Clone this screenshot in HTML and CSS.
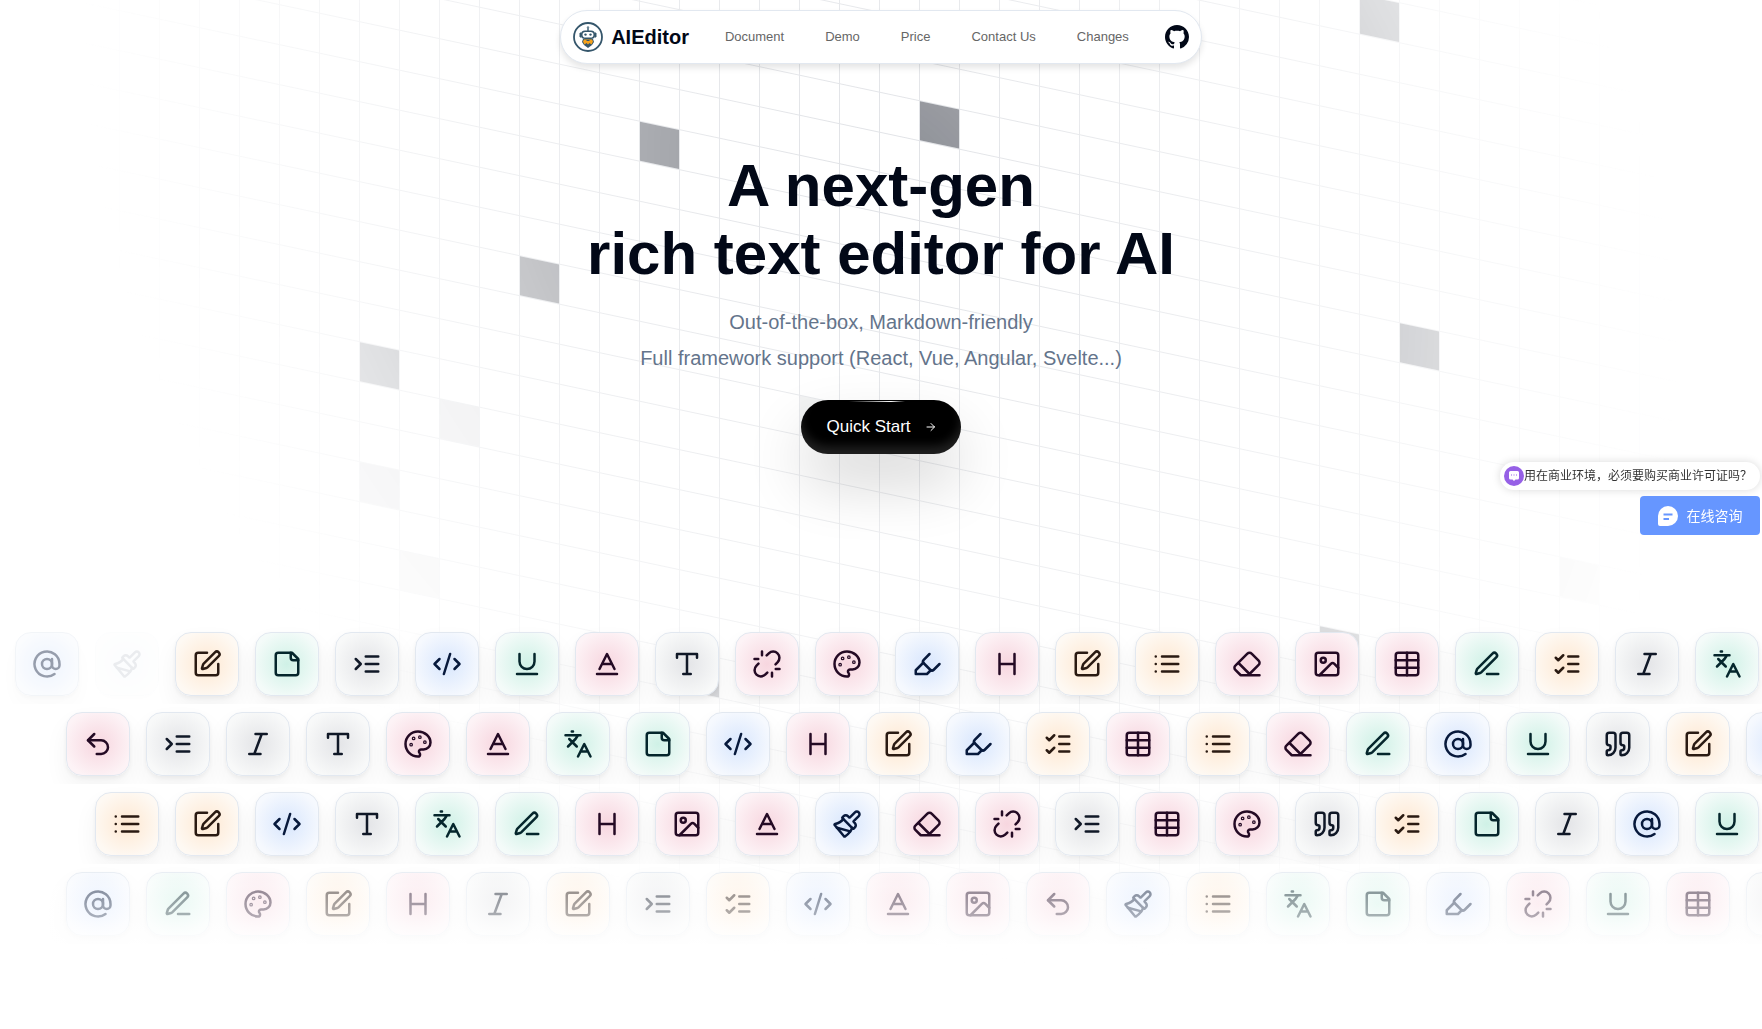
FILE: index.html
```html
<!DOCTYPE html>
<html lang="en">
<head>
<meta charset="utf-8">
<meta name="viewport" content="width=device-width, initial-scale=1">
<title>AIEditor</title>
<link rel="stylesheet" href="styles.css">
</head>
<body>
<svg class="sprite" aria-hidden="true">
  <symbol id="i-at" viewBox="0 0 24 24"><circle cx="12" cy="12" r="4"/><path d="M16 8v5a3 3 0 0 0 6 0v-1a10 10 0 1 0-4 8"/></symbol>
  <symbol id="i-brush" viewBox="0 0 24 24"><path d="m14.622 17.897-10.68-2.913"/><path d="M18.376 2.622a1 1 0 1 1 3.002 3.002L17.36 9.643a.5.5 0 0 0 0 .707l.944.944a2.41 2.41 0 0 1 0 3.408l-.944.944a.5.5 0 0 1-.707 0L8.354 7.348a.5.5 0 0 1 0-.707l.944-.944a2.41 2.41 0 0 1 3.408 0l.944.944a.5.5 0 0 0 .707 0z"/><path d="M9 8c-1.804 2.71-3.97 3.46-6.583 3.948a.507.507 0 0 0-.302.819l7.32 8.883a1 1 0 0 0 1.185.204C12.735 20.405 16 16.792 16 15"/></symbol>
  <symbol id="i-edit" viewBox="0 0 24 24"><path d="M12 3H5a2 2 0 0 0-2 2v14a2 2 0 0 0 2 2h14a2 2 0 0 0 2-2v-7"/><path d="M18.375 2.625a1 1 0 0 1 3 3l-9.013 9.014a2 2 0 0 1-.853.505l-2.873.84a.5.5 0 0 1-.62-.62l.84-2.873a2 2 0 0 1 .506-.852z"/></symbol>
  <symbol id="i-note" viewBox="0 0 24 24"><path d="M16 3H5a2 2 0 0 0-2 2v14a2 2 0 0 0 2 2h14a2 2 0 0 0 2-2V8Z"/><path d="M15 3v4a2 2 0 0 0 2 2h4"/></symbol>
  <symbol id="i-indent" viewBox="0 0 24 24"><path d="m3 8 4 4-4 4M21 12H11M21 6H11M21 18H11"/></symbol>
  <symbol id="i-code" viewBox="0 0 24 24"><path d="m18 16 4-4-4-4M6 8l-4 4 4 4M14.500 4l-5 16"/></symbol>
  <symbol id="i-underline" viewBox="0 0 24 24"><path d="M6 4v6a6 6 0 0 0 12 0V4M4 20h16"/></symbol>
  <symbol id="i-baseline" viewBox="0 0 24 24"><path d="M4 20h16M6 16l6-12 6 12M8 12h8"/></symbol>
  <symbol id="i-type" viewBox="0 0 24 24"><path d="M4 7V4h16v3M9 20h6M12 4v16"/></symbol>
  <symbol id="i-unlink" viewBox="0 0 24 24"><path d="m18.84 12.250 1.720-1.710h-.020a5.004 5.004 0 0 0-.120-7.070 5.006 5.006 0 0 0-6.950 0l-1.720 1.710M5.170 11.750l-1.710 1.710a5.004 5.004 0 0 0 .120 7.070 5.006 5.006 0 0 0 6.950 0l1.710-1.710M8 2v3M2 8h3M16 19v3M19 16h3"/></symbol>
  <symbol id="i-palette" viewBox="0 0 24 24"><circle cx="13.500" cy="6.500" r=".500"/><circle cx="17.500" cy="10.500" r=".500"/><circle cx="8.500" cy="7.500" r=".500"/><circle cx="6.500" cy="12.500" r=".500"/><path d="M12 2C6.500 2 2 6.500 2 12s4.500 10 10 10c.926 0 1.648-.746 1.648-1.688 0-.437-.180-.835-.437-1.125-.290-.289-.438-.652-.438-1.125a1.640 1.640 0 0 1 1.668-1.668h1.996c3.051 0 5.555-2.503 5.555-5.554C21.965 6.012 17.461 2 12 2z"/></symbol>
  <symbol id="i-highlight" viewBox="0 0 24 24"><path d="m9 11-6 6v3h9l3-3"/><path d="m22 12-4.600 4.600a2 2 0 0 1-2.800 0l-5.200-5.200a2 2 0 0 1 0-2.800L14 4"/></symbol>
  <symbol id="i-heading" viewBox="0 0 24 24"><path d="M6 12h12M6 20V4M18 20V4"/></symbol>
  <symbol id="i-list" viewBox="0 0 24 24"><path d="M8 6h13M8 12h13M8 18h13M3 6h.010M3 12h.010M3 18h.010"/></symbol>
  <symbol id="i-eraser" viewBox="0 0 24 24"><path d="m7 21-4.300-4.300c-1-1-1-2.500 0-3.400l9.600-9.600c1-1 2.500-1 3.400 0l5.600 5.600c1 1 1 2.500 0 3.400L13 21M22 21H7M5 11l9 9"/></symbol>
  <symbol id="i-image" viewBox="0 0 24 24"><rect x="3" y="3" width="18" height="18" rx="2"/><circle cx="9" cy="9" r="2"/><path d="m21 15-3.086-3.086a2 2 0 0 0-2.828 0L6 21"/></symbol>
  <symbol id="i-table" viewBox="0 0 24 24"><rect x="3" y="3" width="18" height="18" rx="2"/><path d="M12 3v18M3 9h18M3 15h18"/></symbol>
  <symbol id="i-pen" viewBox="0 0 24 24"><path d="M12 20h9"/><path d="M16.376 3.622a1 1 0 0 1 3.002 3.002L7.368 18.635a2 2 0 0 1-.855.506l-2.872.838a.5.5 0 0 1-.62-.62l.838-2.872a2 2 0 0 1 .506-.854z"/></symbol>
  <symbol id="i-checks" viewBox="0 0 24 24"><path d="m3 17 2 2 4-4M3 7l2 2 4-4M13 6h8M13 12h8M13 18h8"/></symbol>
  <symbol id="i-italic" viewBox="0 0 24 24"><path d="M19 4h-9M14 20H5M15 4 9 20"/></symbol>
  <symbol id="i-translate" viewBox="0 0 24 24"><path d="m5 8 6 6M4 14l6-6 2-3M2 5h12M7 2h1M22 22l-5-10-5 10M14 18h6"/></symbol>
  <symbol id="i-undo" viewBox="0 0 24 24"><path d="M9 14 4 9l5-5"/><path d="M4 9h10.500a5.500 5.500 0 0 1 0 11H11"/></symbol>
  <symbol id="i-quote" viewBox="0 0 24 24"><path d="M16 3a2 2 0 0 0-2 2v6a2 2 0 0 0 2 2 1 1 0 0 1 1 1v1a2 2 0 0 1-2 2 1 1 0 0 0-1 1v2a1 1 0 0 0 1 1 6 6 0 0 0 6-6V5a2 2 0 0 0-2-2z"/><path d="M5 3a2 2 0 0 0-2 2v6a2 2 0 0 0 2 2 1 1 0 0 1 1 1v1a2 2 0 0 1-2 2 1 1 0 0 0-1 1v2a1 1 0 0 0 1 1 6 6 0 0 0 6-6V5a2 2 0 0 0-2-2z"/></symbol>
</svg>

<div class="page">
  <svg class="grid-bg" aria-hidden="true">
    <defs>
      <pattern id="cells" width="40" height="40" patternUnits="userSpaceOnUse" x="-1" y="-1"><path d="M.5 40V.5H40" fill="none"/></pattern>
    </defs>
    <rect width="100%" height="100%" fill="url(#cells)"/>
    <g class="squares">
      <rect x="640" y="520" width="39" height="39" opacity=".48"/>
      <rect x="920" y="440" width="39" height="39" opacity=".48"/>
      <rect x="520" y="680" width="39" height="39" opacity=".44"/>
      <rect x="360" y="800" width="39" height="39" opacity=".42"/>
      <rect x="440" y="840" width="39" height="39" opacity=".12"/>
      <rect x="360" y="920" width="39" height="39" opacity=".15"/>
      <rect x="400" y="1000" width="39" height="39" opacity=".1"/>
      <rect x="1360" y="240" width="39" height="39" opacity=".48"/>
      <rect x="1400" y="560" width="39" height="39" opacity=".49"/>
      <rect x="1560" y="760" width="39" height="39" opacity=".15"/>
      <rect x="1320" y="880" width="39" height="39" opacity=".45"/>
      <rect x="680" y="1040" width="39" height="39" opacity=".5"/>
      <rect x="800" y="760" width="39" height="39" opacity=".07"/>
    </g>
  </svg>

  <header class="navbar">
    <a class="brand" href="#">
      <svg class="brand-logo" viewBox="0 0 30 30" aria-hidden="true">
        <circle cx="15" cy="15" r="14" fill="#fff" stroke="#35566b" stroke-width="1.800"/>
        <path d="M15 5v4" stroke="#6d8797" stroke-width="2"/>
        <circle cx="15" cy="5.500" r="1.200" fill="#6d8797"/>
        <rect x="8" y="8.500" width="14" height="8.500" rx="4" fill="#35566b"/>
        <path d="M8.500 11H7v4h1.500M21.500 11H23v4h-1.500" fill="#35566b" stroke="#35566b"/>
        <rect x="9.500" y="10" width="11" height="5.600" rx="2.800" fill="#fff"/>
        <circle cx="12.500" cy="12.600" r="1.200" fill="#35566b"/><circle cx="17.500" cy="12.600" r="1.200" fill="#35566b"/>
        <path d="M10 17h10l1 3-2 3-4 3-4-3-2-3z" fill="#35566b"/>
        <path d="M11 17.500h8l1 2-1.500 3-2-1.500-1.500 1.500-1.500-1.500-2 1.500L10 19.500z" fill="#f5a11c"/>
        <path d="M13.500 18.500h3" stroke="#35566b"/>
      </svg>
      <span class="brand-name">AIEditor</span>
    </a>
    <nav class="nav-links" aria-label="Main">
      <a href="#">Document</a>
      <a href="#">Demo</a>
      <a href="#">Price</a>
      <a href="#">Contact Us</a>
      <a href="#">Changes</a>
    </nav>
    <a class="github" href="#" aria-label="GitHub">
      <svg viewBox="0 0 16 16" aria-hidden="true"><path d="M8 0C3.580 0 0 3.580 0 8c0 3.540 2.290 6.530 5.470 7.590.4.070.550-.170.550-.380 0-.190-.010-.820-.010-1.490-2.010.370-2.530-.490-2.690-.940-.090-.230-.480-.940-.820-1.130-.280-.150-.680-.520-.010-.530.630-.010 1.080.580 1.230.820.720 1.210 1.870.870 2.330.660.070-.520.280-.870.510-1.070-1.780-.2-3.640-.890-3.640-3.950 0-.870.310-1.590.820-2.150-.080-.2-.360-1.020.080-2.120 0 0 .670-.210 2.200.820.640-.180 1.320-.270 2-.270s1.360.090 2 .270c1.530-1.040 2.200-.820 2.200-.820.440 1.100.160 1.920.080 2.120.510.560.820 1.270.820 2.150 0 3.070-1.870 3.750-3.650 3.950.290.250.540.730.540 1.480 0 1.070-.010 1.930-.010 2.200 0 .210.150.460.550.380A8.012 8.012 0 0 0 16 8c0-4.420-3.580-8-8-8z"/></svg>
    </a>
  </header>

  <main>
    <section class="hero">
      <h1>A next-gen<br>rich text editor for AI</h1>
      <p>Out-of-the-box, Markdown-friendly<br>Full framework support (React, Vue, Angular, Svelte...)</p>
      <button class="cta" type="button">
        Quick Start
        <svg viewBox="0 0 10 10" aria-hidden="true"><path d="M1 5h7.500M5 1.500 8.500 5 5 8.500"/></svg>
      </button>
    </section>
    <section class="marquee" aria-label="Editor features" id="marquee"></section>
  </main>

  <aside class="chat" aria-label="在线咨询">
    <a class="chat-tip" href="#">
      <svg viewBox="0 0 20 20" aria-hidden="true"><circle cx="10" cy="10" r="10" fill="#9660e6"/><path d="M6.500 5h7A1.500 1.500 0 0 1 15 6.500V12a1.500 1.500 0 0 1-1.500 1.500h-2L10 15l-1.500-1.500h-2A1.500 1.500 0 0 1 5 12V6.500A1.500 1.500 0 0 1 6.500 5z" fill="#fff"/><path d="M7 9h1M9.500 9h1M12 9h1" stroke="#9660e6" stroke-width="1.200"/></svg>
      <span>用在商业环境，必须要购买商业许可证吗？</span>
    </a>
    <button class="chat-button" type="button">
      <svg viewBox="0 0 20 20" aria-hidden="true"><path d="M10 0a10 10 0 0 1 0 20H2a2 2 0 0 1-2-2v-8A10 10 0 0 1 10 0z" fill="#fff"/><path d="M5.500 8.500h9M5.500 13h5.500" stroke="#6696ff" stroke-width="1.800"/></svg>
      在线咨询
    </button>
  </aside>
</div>
<script src="marquee.js"></script>
</body>
</html>
```
FILE: styles.css
```css
* { box-sizing: border-box; }

body {
  margin: 0;
  background: #fff;
  color: #020817;
  font-family: "Liberation Sans", Arial, "Noto Sans CJK SC", sans-serif;
}

a { color: inherit; text-decoration: none; }

button { border: 0; font-family: inherit; cursor: pointer; }

.sprite { position: absolute; width: 0; height: 0; }

.page {
  position: relative;
  display: flex;
  flex-direction: column;
  align-items: center;
  min-height: 100vh;
  padding-top: 10px;
  overflow: hidden;
}

/* Skewed grid behind the whole page */
.grid-bg {
  position: absolute;
  top: -347px;
  left: 0;
  width: 100%;
  height: 1600px;
  transform: skewY(12deg);
  mask-image: radial-gradient(800px circle at 50% 547px, #000, transparent);
  pointer-events: none;
}
.grid-bg pattern path { stroke: #9ca3af; stroke-opacity: .32; }
.squares { fill: #020817; }

/* Navigation */
.navbar {
  position: relative;
  display: flex;
  align-items: center;
  height: 54px;
  padding: 0 12px;
  background: #fff;
  border: 1px solid #e2e8f0;
  border-radius: 27px;
  box-shadow: 0 4px 6px rgba(0, 0, 0, .1);
}
.brand { display: flex; align-items: center; gap: 8px; }
.brand-logo { width: 30px; height: 30px; }
.brand-name { font-size: 20px; line-height: 28px; font-weight: 700; }
.nav-links {
  display: flex;
  gap: 41px;
  padding: 0 36px;
  font-size: 13px;
  line-height: 20px;
  color: #666;
}
.github svg { display: block; width: 24px; height: 24px; fill: #020817; }

main { position: relative; width: 100%; }

/* Hero */
.hero {
  display: flex;
  flex-direction: column;
  align-items: center;
  padding-top: 88px;
  text-align: center;
}
.hero h1 { margin: 0; font-size: 60px; line-height: 68px; font-weight: 700; }
.hero p { margin: 16px 0 24px; font-size: 20px; line-height: 36px; color: #64748b; }

.cta {
  position: relative;
  display: flex;
  align-items: center;
  justify-content: center;
  gap: 15px;
  width: 160px;
  height: 54px;
  border-radius: 27px;
  background: #000;
  color: #fff;
  font-size: 17px;
  line-height: 24px;
  box-shadow: inset 0 -8px 10px rgba(255, 255, 255, .12), 0 30px 60px rgba(0, 0, 0, .16);
}
.cta::before {
  content: "";
  position: absolute;
  top: 1px;
  left: 48px;
  width: 56px;
  height: 1px;
  background: linear-gradient(90deg, transparent, #fff 75%, transparent);
}
.cta svg {
  width: 10px;
  height: 10px;
  fill: none;
  stroke: #fff;
  stroke-linecap: round;
  stroke-linejoin: round;
}

/* Rows of feature tiles */
.marquee { position: relative; margin-top: 170px; }
.marquee::after {
  content: "";
  position: absolute;
  inset: 220px 0 -120px;
  background: linear-gradient(
    rgba(255, 255, 255, 0),
    rgba(255, 255, 255, .1) 20px,
    rgba(255, 255, 255, .5) 42px,
    rgba(255, 255, 255, .66) 75px,
    rgba(255, 255, 255, .82) 92px,
    #fff 120px
  );
  pointer-events: none;
}
.row { display: flex; gap: 16px; padding: 8px 0 8px 15px; overflow: hidden; }
.row-inset { padding-left: 66px; }
.row-deep { padding-left: 95px; }

.tile {
  flex: none;
  width: 64px;
  height: 64px;
  padding: 16px;
  border: 1px solid #e2e8f0;
  border-radius: 16px;
  background: radial-gradient(circle closest-side, var(--tint), var(--edge) 110%);
  color: var(--ink);
  box-shadow: 0 2px 4px rgba(0, 0, 0, .05), 0 12px 24px rgba(0, 0, 0, .05);
}
.tile svg {
  display: block;
  width: 30px;
  height: 30px;
  fill: none;
  stroke: currentColor;
  stroke-width: 2;
  stroke-linecap: round;
  stroke-linejoin: round;
}
.blue { --tint: #d8e6fd; --edge: #f6f9fe; --ink: #07193c; }
.green { --tint: #cff1e6; --edge: #f4fbf9; --ink: #05262c; }
.orange { --tint: #fee8d2; --edge: #fef9f3; --ink: #2a1a12; }
.rose { --tint: #f7d6df; --edge: #fdf3f6; --ink: #240a24; }
.gray { --tint: #e3e4e7; --edge: #f8f9f9; --ink: #101827; }
.entering { opacity: .42; }
.leaving { opacity: .08; }

/* Chat widget */
.chat {
  position: fixed;
  top: 462px;
  right: 2px;
  display: flex;
  flex-direction: column;
  align-items: flex-end;
  gap: 6px;
}
.chat svg { width: 20px; height: 20px; flex: none; }
.chat-tip {
  display: flex;
  align-items: center;
  height: 28px;
  padding: 0 8px 0 4px;
  border-radius: 14px;
  background: #fff;
  color: #333;
  font-size: 12px;
  line-height: 20px;
  white-space: nowrap;
  box-shadow: 0 0 8px rgba(0, 0, 0, .15);
}
.chat-button {
  display: flex;
  align-items: center;
  justify-content: center;
  gap: 9px;
  width: 120px;
  height: 39px;
  padding: 0;
  border-radius: 4px;
  background: #6696ff;
  color: #fff;
  font-size: 14px;
  line-height: 20px;
}
.chat-button svg { fill: none; }
```
FILE: marquee.js
```js
const tones = {
  blue: "at brush code highlight",
  green: "note underline pen translate",
  orange: "edit list checks",
  gray: "indent type italic quote",
  rose: "baseline unlink palette heading eraser image table undo"
};

const rows = [
  { className: "row", icons: "at brush edit note indent code underline baseline type unlink palette highlight heading edit list eraser image table pen checks italic translate" },
  { className: "row row-inset", icons: "undo indent italic type palette baseline translate note code heading edit highlight checks table list eraser pen at underline quote edit brush" },
  { className: "row row-deep", icons: "list edit code type translate pen heading image baseline brush eraser unlink indent table palette quote checks note italic at underline" },
  { className: "row row-inset", icons: "at pen palette edit heading italic edit indent checks code baseline image undo brush list translate note highlight unlink underline table type" }
];

const toneOf = {};
for (const [tone, names] of Object.entries(tones)) {
  for (const name of names.split(" ")) toneOf[name] = tone;
}

// The first row is mid-transition: one tile fades in while another fades out.
const transition = ["entering", "leaving"];

document.getElementById("marquee").innerHTML = rows.map((row, r) => {
  const tiles = row.icons.split(" ").map((name, i) => {
    const state = r === 0 && transition[i] ? " " + transition[i] : "";
    return `<div class="tile ${toneOf[name]}${state}"><svg aria-hidden="true"><use href="#i-${name}"/></svg></div>`;
  });
  return `<div class="${row.className}">${tiles.join("")}</div>`;
}).join("");
```
